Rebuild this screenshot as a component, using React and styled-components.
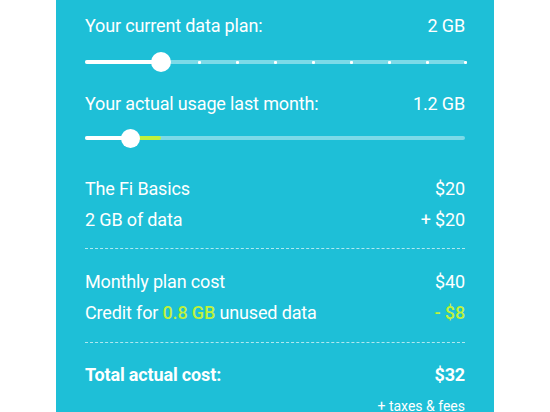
import React from "react";
import styled, { createGlobalStyle } from "styled-components";

const Global = createGlobalStyle`
  html, body { margin: 0; padding: 0; background: #ffffff; }
  body { font-family: Roboto, "Noto Sans", Arial, sans-serif; }
`;

const Page = styled.div`
  width: 550px;
  height: 412px;
  overflow: hidden;
  background: #ffffff;
  display: flex;
  align-items: stretch;
`;

const Panel = styled.section`
  margin-left: 56px;
  width: 438px;
  box-sizing: border-box;
  padding: 10px 29px 0 29px;
  background: #1ebfd7;
  color: #ffffff;
  display: flex;
  flex-direction: column;
  & > * {
    flex-shrink: 0;
  }
`;

const Row = styled.div`
  display: flex;
  justify-content: space-between;
  align-items: baseline;
  font-size: 18px;
  line-height: 31px;
  font-weight: ${(p) => (p.$bold ? 700 : 400)};
  margin-top: ${(p) => p.$mt || 0}px;
  letter-spacing: -0.15px;
`;

const Value = styled.span`
  color: ${(p) => (p.$accent ? "#bff23c" : "#ffffff")};
  font-weight: ${(p) => (p.$accent ? 500 : "inherit")};
`;

const Accent = styled.span`
  color: #bff23c;
  font-weight: 500;
`;

const SliderBox = styled.div`
  position: relative;
  height: ${(p) => p.$h}px;
  margin-bottom: ${(p) => p.$mb || 0}px;
`;

const Track = styled.div`
  position: absolute;
  left: 0;
  right: 0;
  top: 50%;
  height: 4px;
  margin-top: -2px;
  border-radius: 2px;
  background: rgba(255, 255, 255, 0.42);
`;

const Fill = styled.div`
  position: absolute;
  top: 50%;
  height: 4px;
  margin-top: -2px;
  border-radius: 2px;
  background: ${(p) => p.$color};
`;

const Dot = styled.div`
  position: absolute;
  top: 50%;
  width: 3px;
  height: 3px;
  margin: -1.5px 0 0 -1.5px;
  border-radius: 1px;
  background: #ffffff;
`;

const Thumb = styled.div`
  position: absolute;
  top: 50%;
  width: ${(p) => p.$size}px;
  height: ${(p) => p.$size}px;
  margin-top: ${(p) => -p.$size / 2}px;
  margin-left: ${(p) => -p.$size / 2}px;
  border-radius: 50%;
  background: #ffffff;
`;

const Divider = styled.hr`
  border: 0;
  border-top: 1px dashed rgba(255, 255, 255, 0.65);
  margin: ${(p) => p.$mt}px 0 0 0;
  height: 0;
`;

const Note = styled.div`
  text-align: right;
  font-size: 14px;
  line-height: 24px;
  margin-top: 4px;
`;

const WIDTH = 380;
const MAX = 10;
const pos = (v) => (v / MAX) * WIDTH;

function PlanSlider({ value, h, mb }) {
  const dots = [];
  for (let i = Math.floor(value) + 1; i <= MAX; i++) dots.push(i);
  return (
    <SliderBox $h={h} $mb={mb}>
      <Track />
      <Fill $color="#ffffff" style={{ left: 0, width: pos(value) }} />
      {dots.map((d) => (
        <Dot key={d} style={{ left: pos(d) }} />
      ))}
      <Thumb $size={20} style={{ left: pos(value) }} />
    </SliderBox>
  );
}

function UsageSlider({ value, plan, h }) {
  return (
    <SliderBox $h={h}>
      <Track />
      <Fill $color="#ffffff" style={{ left: 0, width: pos(value) }} />
      <Fill $color="#bff23c" style={{ left: pos(value), width: pos(plan) - pos(value) }} />
      <Thumb $size={19} style={{ left: pos(value) }} />
    </SliderBox>
  );
}

export default function App() {
  return (
    <>
      <Global />
      <Page>
        <Panel>
          <Row>
            <span>Your current data plan:</span>
            <Value>2 GB</Value>
          </Row>
          <PlanSlider value={2} h={42} mb={5} />
          <Row>
            <span>Your actual usage last month:</span>
            <Value>1.2 GB</Value>
          </Row>
          <UsageSlider value={1.2} plan={2} h={38} />

          <Row $mt={16}>
            <span>The Fi Basics</span>
            <Value>$20</Value>
          </Row>
          <Row>
            <span>2 GB of data</span>
            <Value>+ $20</Value>
          </Row>
          <Divider $mt={13} />

          <Row $mt={17}>
            <span>Monthly plan cost</span>
            <Value>$40</Value>
          </Row>
          <Row>
            <span>
              Credit for <Accent>0.8 GB</Accent> unused data
            </span>
            <Value $accent>- $8</Value>
          </Row>
          <Divider $mt={14} />

          <Row $mt={16} $bold>
            <span>Total actual cost:</span>
            <Value>$32</Value>
          </Row>
          <Note>+ taxes &amp; fees</Note>
        </Panel>
      </Page>
    </>
  );
}
